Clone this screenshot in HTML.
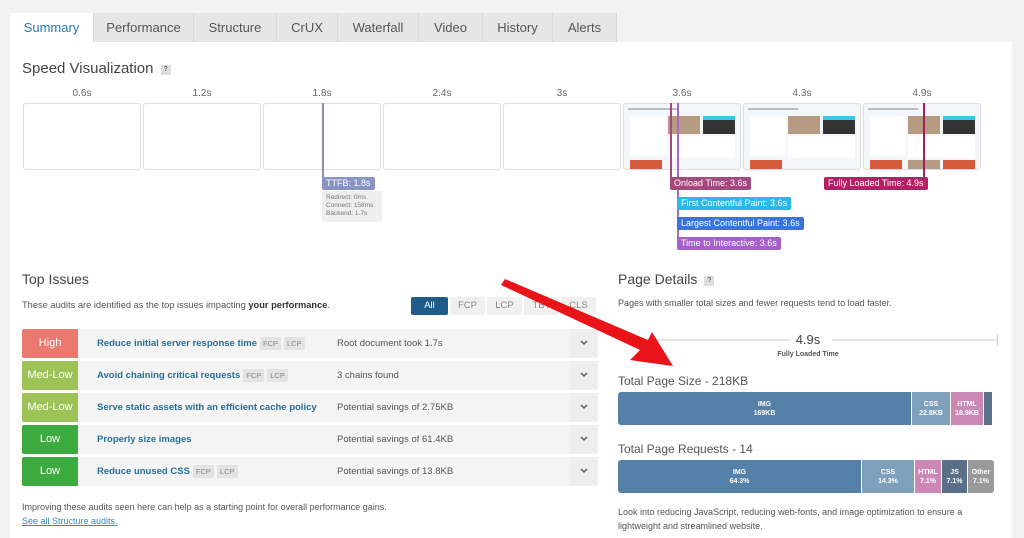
<!DOCTYPE html>
<html><head><meta charset="utf-8"><style>
*{box-sizing:border-box;margin:0;padding:0}
body{width:1024px;height:538px;overflow:hidden;background:#f2f2f2;font-family:"Liberation Sans",sans-serif;position:relative;color:#333}
.a{position:absolute}
.tab{position:absolute;top:13px;height:29px;background:#e6e6e6;color:#555;font-size:13px;text-align:center;line-height:29px;border-right:1px solid #d8d8d8}
.panel{position:absolute;left:10px;top:42px;width:1002px;height:496px;background:#fff}
.fr{position:absolute;top:103px;width:118px;height:67px;border:1px solid #ddd;border-radius:3px;background:#fff}
.lbl{position:absolute;top:88px;font-size:10px;color:#666;width:118px;text-align:center}
.th{background:#f3f7fb;overflow:hidden}
.tag{position:absolute;color:#fff;font-size:9px;height:13px;line-height:13px;padding:0 4px;border-radius:2px}
.row{position:absolute;left:22px;width:576px;height:29px;background:#f4f4f4;border-radius:2px}
.bd{position:absolute;left:0;top:0;width:56px;height:29px;color:#fff;font-size:11px;text-align:center;line-height:29px;border-radius:2px 0 0 2px}
.tt{position:absolute;left:75px;top:0;height:29px;line-height:29px;font-size:9.5px;font-weight:bold;color:#2a6d96;white-space:nowrap}
.ch{display:inline-block;background:#e3e3e3;color:#888;font-weight:normal;font-size:7.5px;line-height:9px;padding:2px 3px;margin-left:3px;vertical-align:middle}
.ds{position:absolute;left:315px;top:0;line-height:29px;font-size:9.5px;color:#555}
.cv{position:absolute;right:0;top:0;width:28px;height:29px;background:#eee}
.cv svg{position:absolute;left:10px;top:11px}
.fb{position:absolute;top:297px;width:35px;height:18px;background:#f0f0f0;color:#888;font-size:9.5px;text-align:center;line-height:18px;border-radius:2px}
.seg{position:absolute;color:#fff;font-size:7px;font-weight:bold;text-align:center;line-height:9px;display:flex;flex-direction:column;justify-content:center}
</style></head><body>
<div class="panel"></div>
<div class="tab" style="left:10px;width:84px;background:#fff;color:#2a7ab0">Summary</div>
<div class="tab" style="left:94px;width:100px">Performance</div>
<div class="tab" style="left:194px;width:83px">Structure</div>
<div class="tab" style="left:277px;width:61px">CrUX</div>
<div class="tab" style="left:338px;width:81px">Waterfall</div>
<div class="tab" style="left:419px;width:64px">Video</div>
<div class="tab" style="left:483px;width:70px">History</div>
<div class="tab" style="left:553px;width:64px">Alerts</div>

<div class="a" style="left:22px;top:60px;font-size:15px;color:#444">Speed Visualization <span style="display:inline-block;width:10px;height:10px;background:#ddd;font-size:7px;text-align:center;line-height:10px;vertical-align:2px;margin-left:3px">?</span></div>

<div class="lbl" style="left:23px">0.6s</div><div class="lbl" style="left:143px">1.2s</div><div class="lbl" style="left:263px">1.8s</div><div class="lbl" style="left:383px">2.4s</div><div class="lbl" style="left:503px">3s</div><div class="lbl" style="left:623px">3.6s</div><div class="lbl" style="left:743px">4.3s</div><div class="lbl" style="left:863px">4.9s</div>
<div class="fr" style="left:23px"></div><div class="fr" style="left:143px"></div><div class="fr" style="left:263px"></div><div class="fr" style="left:383px"></div><div class="fr" style="left:503px"></div>
<div class="fr th" style="left:623px"><div class="a" style="left:4px;top:4px;width:50px;height:2px;background:#bbb"></div><div class="a" style="left:6px;top:12px;width:36px;height:40px;background:#fff"></div><div class="a" style="left:44px;top:12px;width:32px;height:18px;background:#b69a82"></div><div class="a" style="left:79px;top:12px;width:32px;height:18px;background:#333;border-top:4px solid #3cc8e8"></div><div class="a" style="left:44px;top:32px;width:67px;height:22px;background:#fff"></div><div class="a" style="left:6px;top:56px;width:32px;height:11px;background:#d45a3c"></div></div>
<div class="fr th" style="left:743px"><div class="a" style="left:4px;top:4px;width:50px;height:2px;background:#bbb"></div><div class="a" style="left:6px;top:12px;width:36px;height:40px;background:#fff"></div><div class="a" style="left:44px;top:12px;width:32px;height:18px;background:#b69a82"></div><div class="a" style="left:79px;top:12px;width:32px;height:18px;background:#333;border-top:4px solid #3cc8e8"></div><div class="a" style="left:44px;top:32px;width:67px;height:22px;background:#fff"></div><div class="a" style="left:6px;top:56px;width:32px;height:11px;background:#d45a3c"></div></div>
<div class="fr th" style="left:863px"><div class="a" style="left:4px;top:4px;width:50px;height:2px;background:#bbb"></div><div class="a" style="left:6px;top:12px;width:36px;height:40px;background:#fff"></div><div class="a" style="left:44px;top:12px;width:32px;height:18px;background:#b69a82"></div><div class="a" style="left:79px;top:12px;width:32px;height:18px;background:#333;border-top:4px solid #3cc8e8"></div><div class="a" style="left:44px;top:32px;width:67px;height:22px;background:#fff"></div><div class="a" style="left:6px;top:56px;width:32px;height:11px;background:#d45a3c"></div><div class="a" style="left:44px;top:56px;width:32px;height:11px;background:#b69a82"></div><div class="a" style="left:79px;top:56px;width:32px;height:11px;background:#d45a3c"></div></div>

<div class="a" style="left:322px;top:103px;width:2px;height:85px;background:#8a8fb8"></div>
<div class="tag" style="left:322px;top:177px;background:#8a94c4">TTFB: 1.8s</div>
<div class="a" style="left:322px;top:191px;width:60px;height:31px;background:#eee;border-radius:0 0 3px 3px;font-size:6.5px;color:#777;line-height:8px;padding:3px 4px">Redirect: 0ms<br>Connect: 158ms<br>Backend: 1.7s</div>

<div class="a" style="left:670px;top:103px;width:2px;height:85px;background:#a04a7e"></div>
<div class="a" style="left:677px;top:103px;width:2px;height:145px;background:#a868c8"></div>
<div class="a" style="left:923px;top:103px;width:2px;height:85px;background:#a02060"></div>
<div class="tag" style="left:670px;top:177px;background:#a04a7e">Onload Time: 3.6s</div>
<div class="tag" style="left:824px;top:177px;background:#b02265">Fully Loaded Time: 4.9s</div>
<div class="tag" style="left:677px;top:197px;background:#29b8e8">First Contentful Paint: 3.6s</div>
<div class="tag" style="left:677px;top:217px;background:#3a74d8">Largest Contentful Paint: 3.6s</div>
<div class="tag" style="left:677px;top:237px;background:#a660c8">Time to Interactive: 3.6s</div>

<div class="a" style="left:22px;top:271px;font-size:14px;color:#444">Top Issues</div>
<div class="a" style="left:22px;top:300px;font-size:9.3px;color:#555">These audits are identified as the top issues impacting <b style="color:#333">your performance</b>.</div>
<div class="fb" style="left:411px;width:37px;background:#1f5c8a;color:#fff">All</div>
<div class="fb" style="left:450px">FCP</div><div class="fb" style="left:487px">LCP</div><div class="fb" style="left:524px">TBT</div><div class="fb" style="left:561px">CLS</div>

<div class="row" style="top:329px"><div class="bd" style="background:#ea7a70">High</div><div class="tt">Reduce initial server response time<span class="ch">FCP</span><span class="ch">LCP</span></div><div class="ds">Root document took 1.7s</div><div class="cv"><svg width="8" height="6"><path d="M1 1 L4 4 L7 1" stroke="#666" stroke-width="1.6" fill="none"/></svg></div></div>
<div class="row" style="top:361px"><div class="bd" style="background:#9dc356">Med-Low</div><div class="tt">Avoid chaining critical requests<span class="ch">FCP</span><span class="ch">LCP</span></div><div class="ds">3 chains found</div><div class="cv"><svg width="8" height="6"><path d="M1 1 L4 4 L7 1" stroke="#666" stroke-width="1.6" fill="none"/></svg></div></div>
<div class="row" style="top:393px"><div class="bd" style="background:#9dc356">Med-Low</div><div class="tt">Serve static assets with an efficient cache policy</div><div class="ds">Potential savings of 2.75KB</div><div class="cv"><svg width="8" height="6"><path d="M1 1 L4 4 L7 1" stroke="#666" stroke-width="1.6" fill="none"/></svg></div></div>
<div class="row" style="top:425px"><div class="bd" style="background:#3daa40">Low</div><div class="tt">Properly size images</div><div class="ds">Potential savings of 61.4KB</div><div class="cv"><svg width="8" height="6"><path d="M1 1 L4 4 L7 1" stroke="#666" stroke-width="1.6" fill="none"/></svg></div></div>
<div class="row" style="top:457px"><div class="bd" style="background:#3daa40">Low</div><div class="tt">Reduce unused CSS<span class="ch">FCP</span><span class="ch">LCP</span></div><div class="ds">Potential savings of 13.8KB</div><div class="cv"><svg width="8" height="6"><path d="M1 1 L4 4 L7 1" stroke="#666" stroke-width="1.6" fill="none"/></svg></div></div>

<div class="a" style="left:22px;top:502px;font-size:9px;color:#555">Improving these audits seen here can help as a starting point for overall performance gains.</div>
<div class="a" style="left:22px;top:516px;font-size:9px;color:#3a8ac0;text-decoration:underline">See all Structure audits.</div>

<div class="a" style="left:618px;top:271px;font-size:14px;color:#444">Page Details <span style="display:inline-block;width:10px;height:10px;background:#ddd;font-size:7px;text-align:center;line-height:10px;vertical-align:2px;margin-left:3px">?</span></div>
<div class="a" style="left:618px;top:298px;font-size:9px;color:#555">Pages with smaller total sizes and fewer requests tend to load faster.</div>
<div class="a" style="left:620px;top:339px;width:170px;height:2px;background:#e5e5e5"></div>
<div class="a" style="left:832px;top:339px;width:166px;height:2px;background:#e5e5e5"></div>
<div class="a" style="left:997px;top:334px;width:1px;height:12px;background:#ccc"></div>
<div class="a" style="left:770px;top:332px;width:76px;text-align:center;font-size:13px;color:#444">4.9s</div>
<div class="a" style="left:758px;top:351px;width:100px;text-align:center;font-size:7px;font-weight:bold;color:#555">Fully Loaded Time</div>

<div class="a" style="left:618px;top:374px;font-size:12px;color:#555">Total Page Size - 218KB</div>
<div class="seg" style="left:618px;top:392px;width:293px;height:33px;background:#5580a8;border-radius:3px 0 0 3px">IMG<br>169KB</div>
<div class="seg" style="left:912px;top:392px;width:38px;height:33px;background:#7fa0bb">CSS<br>22.8KB</div>
<div class="seg" style="left:951px;top:392px;width:32px;height:33px;background:#cc88b5">HTML<br>18.9KB</div>
<div class="seg" style="left:984px;top:392px;width:8px;height:33px;background:#5a7088"></div>

<div class="a" style="left:618px;top:442px;font-size:12px;color:#555">Total Page Requests - 14</div>
<div class="seg" style="left:618px;top:460px;width:243px;height:33px;background:#5580a8;border-radius:3px 0 0 3px">IMG<br>64.3%</div>
<div class="seg" style="left:862px;top:460px;width:52px;height:33px;background:#7fa0bb">CSS<br>14.3%</div>
<div class="seg" style="left:915px;top:460px;width:26px;height:33px;background:#cc88b5">HTML<br>7.1%</div>
<div class="seg" style="left:942px;top:460px;width:25px;height:33px;background:#5a7088">JS<br>7.1%</div>
<div class="seg" style="left:968px;top:460px;width:26px;height:33px;background:#9a9a9a;border-radius:0 3px 3px 0">Other<br>7.1%</div>
<div class="a" style="left:618px;top:505px;width:380px;font-size:9px;color:#555;line-height:14px">Look into reducing JavaScript, reducing web-fonts, and image optimization to ensure a lightweight and streamlined website.</div>

<svg class="a" style="left:0;top:0" width="1024" height="538"><polygon points="501,285 505,279 648,340 652,332 673,366 630,360 640,350" fill="#e8141a"/></svg>
</body></html>
